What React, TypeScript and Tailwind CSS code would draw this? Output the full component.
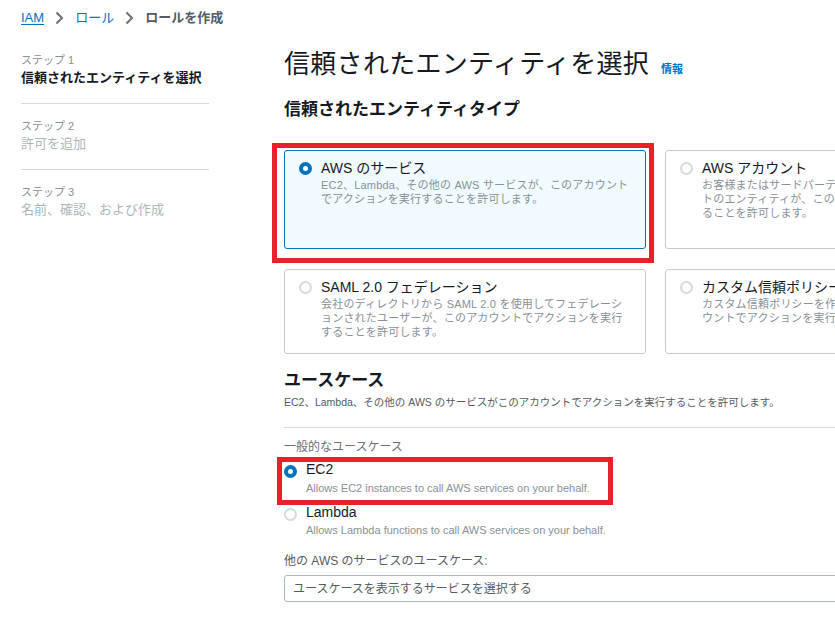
import React from 'react'

function Chevron() {
  return (
    <svg width="9" height="14" viewBox="0 0 9 14" className="shrink-0">
      <path d="M1.5 1.5 L7 7 L1.5 12.5" stroke="#687078" strokeWidth="2" fill="none" />
    </svg>
  )
}

function Radio({ checked }: { checked?: boolean }) {
  if (checked) {
    return <span className="block w-[13px] h-[13px] rounded-full border-[4px] border-[#0073bb] bg-white shrink-0" />
  }
  return <span className="block w-[13px] h-[13px] rounded-full border-2 border-[#d5dbdb] bg-white shrink-0" />
}

function TypeCard({
  title,
  lines,
  selected,
}: {
  title: string
  lines: string[]
  selected?: boolean
}) {
  return (
    <div
      className={
        selected
          ? 'h-full border border-[#0073bb] bg-[#f1faff] rounded-[3px] pl-[14px] pt-[7px] flex gap-[9px]'
          : 'h-full border border-[#c6cbd1] bg-white rounded-[3px] pl-[14px] pt-[7px] flex gap-[9px]'
      }
    >
      <div className="mt-[4px]">
        <Radio checked={selected} />
      </div>
      <div>
        <div className="text-[14px] leading-5 text-[#16191f] whitespace-nowrap">{title}</div>
        <div className="text-[11px] leading-[14px] text-[#879196] tracking-[0.2px]">
          {lines.map((l) => (
            <div key={l} className="whitespace-nowrap">
              {l}
            </div>
          ))}
        </div>
      </div>
    </div>
  )
}

export default function App() {
  return (
    <div className="w-[835px] h-[641px] overflow-hidden bg-white font-['Liberation_Sans','Noto_Sans_CJK_JP',sans-serif]">
      {/* breadcrumb */}
      <div className="flex items-center h-5 mt-2 ml-[21px] text-[13px] leading-5">
        <span className="text-[#0073bb] underline underline-offset-2">IAM</span>
        <span className="mx-[11px] flex items-center">
          <Chevron />
        </span>
        <span className="text-[#0073bb]">ロール</span>
        <span className="mx-[11px] flex items-center">
          <Chevron />
        </span>
        <span className="font-bold text-[#545b64]">ロールを作成</span>
      </div>

      <div className="flex items-start">
        {/* steps */}
        <nav className="w-[188px] ml-[21px] mt-[24px] shrink-0">
          <div className="pb-[15px] border-b border-[#d5dbdb]">
            <div className="text-[11px] leading-4 text-[#879196]">ステップ 1</div>
            <div className="text-[13px] leading-5 font-bold text-[#16191f]">信頼されたエンティティを選択</div>
          </div>
          <div className="pt-[14px] pb-[15px] border-b border-[#d5dbdb]">
            <div className="text-[11px] leading-4 text-[#879196]">ステップ 2</div>
            <div className="text-[13px] leading-5 text-[#aab7b8]">許可を追加</div>
          </div>
          <div className="pt-[14px]">
            <div className="text-[11px] leading-4 text-[#879196]">ステップ 3</div>
            <div className="text-[13px] leading-5 text-[#aab7b8]">名前、確認、および作成</div>
          </div>
        </nav>

        {/* main */}
        <main className="ml-[75px] mt-[18px] w-[743px] shrink-0">
          <div className="flex items-baseline h-9">
            <h1 className="text-[26px] leading-9 font-normal text-[#16191f] whitespace-nowrap tracking-[0.3px]">
              信頼されたエンティティを選択
            </h1>
            <span className="ml-[12px] text-[11px] font-bold text-[#0073bb]">情報</span>
          </div>

          <h2 className="mt-4 text-[17px] leading-6 font-bold text-[#16191f]">信頼されたエンティティタイプ</h2>

          <div className="mt-[28px] grid grid-cols-[362px_362px] grid-rows-[99px_85px] gap-x-[19px] gap-y-[20px]">
            <div className="relative">
              <TypeCard
                selected
                title="AWS のサービス"
                lines={['EC2、Lambda、その他の AWS サービスが、このアカウント', 'でアクションを実行することを許可します。']}
              />
              <div className="absolute left-[-12px] top-[-7px] w-[382px] h-[120px] border-[5px] border-[#e8202a] pointer-events-none" />
            </div>
            <TypeCard
              title="AWS アカウント"
              lines={[
                'お客様またはサードパーティに属する他の AWS アカウン',
                'トのエンティティが、このアカウントでアクションを実行す',
                'ることを許可します。',
              ]}
            />
            <TypeCard
              title="SAML 2.0 フェデレーション"
              lines={[
                '会社のディレクトリから SAML 2.0 を使用してフェデレーシ',
                'ョンされたユーザーが、このアカウントでアクションを実行',
                'することを許可します。',
              ]}
            />
            <TypeCard
              title="カスタム信頼ポリシー"
              lines={[
                'カスタム信頼ポリシーを作成して、他のユーザーがこのアカ',
                'ウントでアクションを実行できるようにします。',
              ]}
            />
          </div>

          <h2 className="mt-[15px] text-[17px] leading-6 font-bold text-[#16191f]">ユースケース</h2>
          <p className="mt-[1px] text-[10.5px] leading-4 text-[#545b64] whitespace-nowrap">
            EC2、Lambda、その他の AWS のサービスがこのアカウントでアクションを実行することを許可します。
          </p>

          <div className="mt-[17px] border-t border-[#d5dbdb]" />

          <div className="mt-[10px] text-[12px] leading-[18px] text-[#687078]">一般的なユースケース</div>

          <div className="relative mt-[4px] flex gap-[9px]">
            <div className="mt-[5px]">
              <Radio checked />
            </div>
            <div>
              <div className="text-[14px] leading-[18px] text-[#16191f]">EC2</div>
              <div className="mt-[2px] text-[11px] leading-4 text-[#879196]">
                Allows EC2 instances to call AWS services on your behalf.
              </div>
            </div>
            <div className="absolute left-[-7px] top-[-3px] w-[336px] h-[48px] border-[5px] border-[#e8202a] pointer-events-none" />
          </div>

          <div className="mt-[7px] flex gap-[9px]">
            <div className="mt-[5px]">
              <Radio />
            </div>
            <div>
              <div className="text-[14px] leading-[18px] text-[#16191f]">Lambda</div>
              <div className="mt-[1px] text-[11px] leading-4 text-[#879196]">
                Allows Lambda functions to call AWS services on your behalf.
              </div>
            </div>
          </div>

          <div className="mt-[14px] text-[12px] leading-[18px] text-[#545b64]">他の AWS のサービスのユースケース:</div>

          <div className="mt-[5px] h-[27px] border border-[#aab7b8] rounded-[3px] pl-[8px] flex items-center">
            <span className="text-[12px] text-[#545b64]">ユースケースを表示するサービスを選択する</span>
          </div>
        </main>
      </div>
    </div>
  )
}
